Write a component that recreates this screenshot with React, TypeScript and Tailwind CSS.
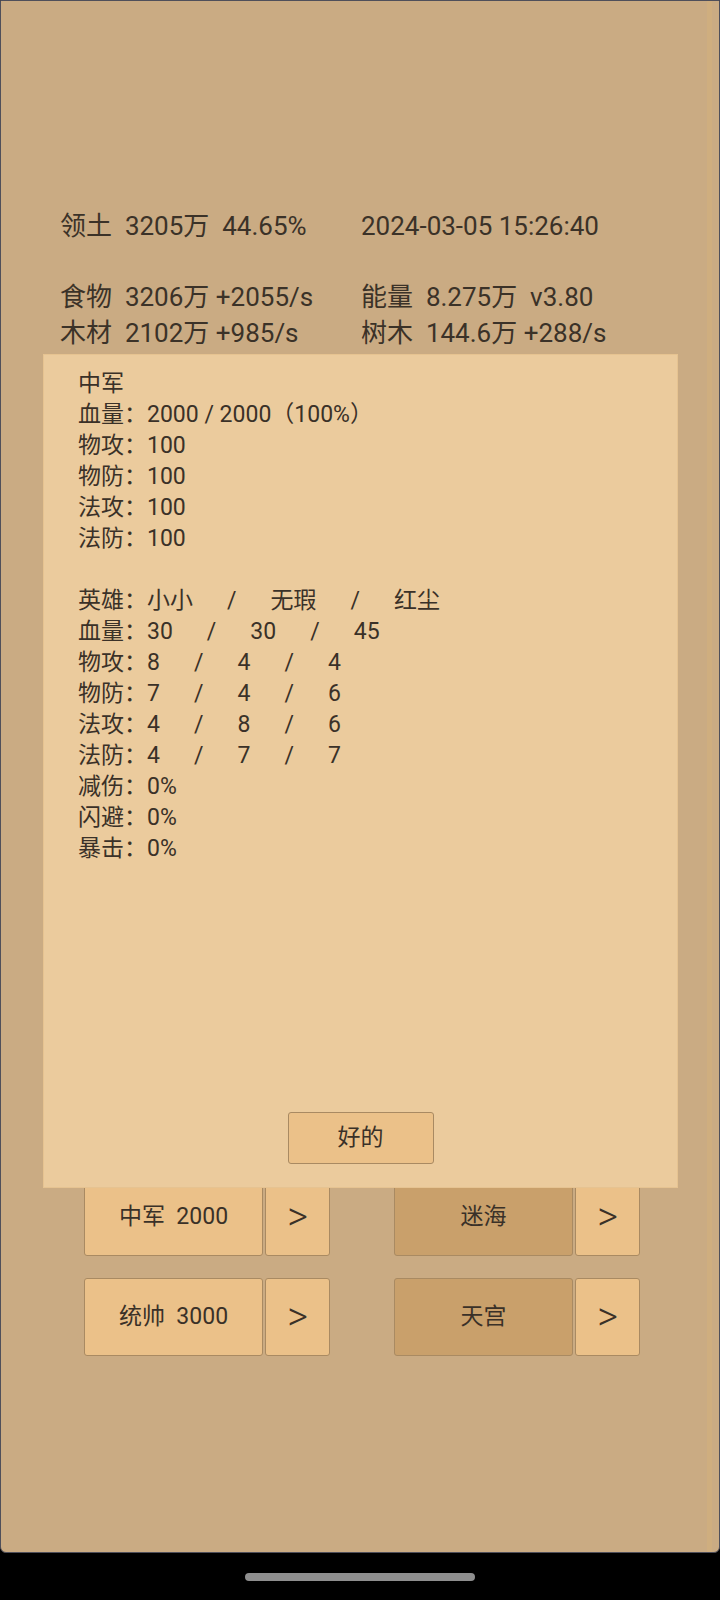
import React from "react";

const font = "font-['Roboto','Noto_Sans_CJK_SC',sans-serif]";

const heroRows: [string, string[]][] = [
  ["英雄", ["小小", "无瑕", "红尘"]],
  ["血量", ["30", "30", "45"]],
  ["物攻", ["8", "4", "4"]],
  ["物防", ["7", "4", "6"]],
  ["法攻", ["4", "8", "6"]],
  ["法防", ["4", "7", "7"]],
];

const StatLine = ({ left, right }: { left: string; right: string }) => (
  <div className="grid grid-cols-[301px_auto] h-[36px] items-center whitespace-pre">
    <span>{left}</span>
    <span>{right}</span>
  </div>
);

const TeamButton = ({ label, dark }: { label: string; dark?: boolean }) => (
  <div className="flex gap-[2px]">
    <button
      className={`w-[179px] h-[78px] rounded-[3px] border border-[#a98a62] text-[23px] text-[#3a3128] whitespace-pre ${
        dark ? "bg-[#c9a06b]" : "bg-[#ebc189]"
      }`}
    >
      {label}
    </button>
    <button className="w-[65px] h-[78px] rounded-[3px] border border-[#a98a62] bg-[#ebc189] text-[40px] font-light leading-none text-[#3a3128]">
      &gt;
    </button>
  </div>
);

export default function App() {
  return (
    <div className={`w-[720px] h-[1600px] bg-black flex flex-col ${font}`}>
      <div className="relative h-[1553px] shrink-0 bg-[#caab83] border border-[#4f4f5a] rounded-b-[6px]">
        {/* resource header */}
        <div className="pt-[206px] pl-[59px] text-[26px] text-[#3b3228]">
          <StatLine left="领土  3205万  44.65%" right="2024-03-05 15:26:40" />
          <div className="h-[36px]" />
          <div className="-mt-[1px]">
            <StatLine left="食物  3206万 +2055/s" right="能量  8.275万  v3.80" />
            <StatLine left="木材  2102万 +985/s" right="树木  144.6万 +288/s" />
          </div>
        </div>

        {/* team buttons */}
        <div className="mt-[828px] flex flex-col gap-[22px] pl-[83px]">
          <div className="flex gap-[64px]">
            <TeamButton label="中军  2000" />
            <TeamButton label="迷海" dark />
          </div>
          <div className="flex gap-[64px]">
            <TeamButton label="统帅  3000" />
            <TeamButton label="天宫" dark />
          </div>
        </div>

        <div className="absolute top-0 bottom-0 right-[7px] w-[5px] bg-[#cfae7f]" />

        {/* info dialog */}
        <div className="absolute left-[42px] top-[353px] w-[635px] h-[834px] bg-[#ebcb9d] border border-[#e6c391] flex flex-col">
          <div className="pt-[13px] pl-[34px] text-[23px] leading-[31px] text-[#3a3128] whitespace-pre">
            <div>中军</div>
            <div>血量：2000 / 2000（100%）</div>
            <div>物攻：100</div>
            <div>物防：100</div>
            <div>法攻：100</div>
            <div>法防：100</div>
            <div className="h-[31px]" />
            {heroRows.map(([k, vals]) => (
              <div key={k}>
                {k}：{vals[0]}
                <span className="px-[34px]">/</span>
                {vals[1]}
                <span className="px-[34px]">/</span>
                {vals[2]}
              </div>
            ))}
            <div>减伤：0%</div>
            <div>闪避：0%</div>
            <div>暴击：0%</div>
          </div>
          <div className="flex-1" />
          <div className="flex justify-center pb-[23px]">
            <button className="w-[146px] h-[52px] rounded-[3px] border border-[#a98a62] bg-[#ebc189] text-[23px] text-[#3a3128]">
              好的
            </button>
          </div>
        </div>
      </div>

      <div className="flex-1 flex items-center justify-center">
        <div className="w-[230px] h-[8px] rounded-full bg-[#8e8e8e]" />
      </div>
    </div>
  );
}
